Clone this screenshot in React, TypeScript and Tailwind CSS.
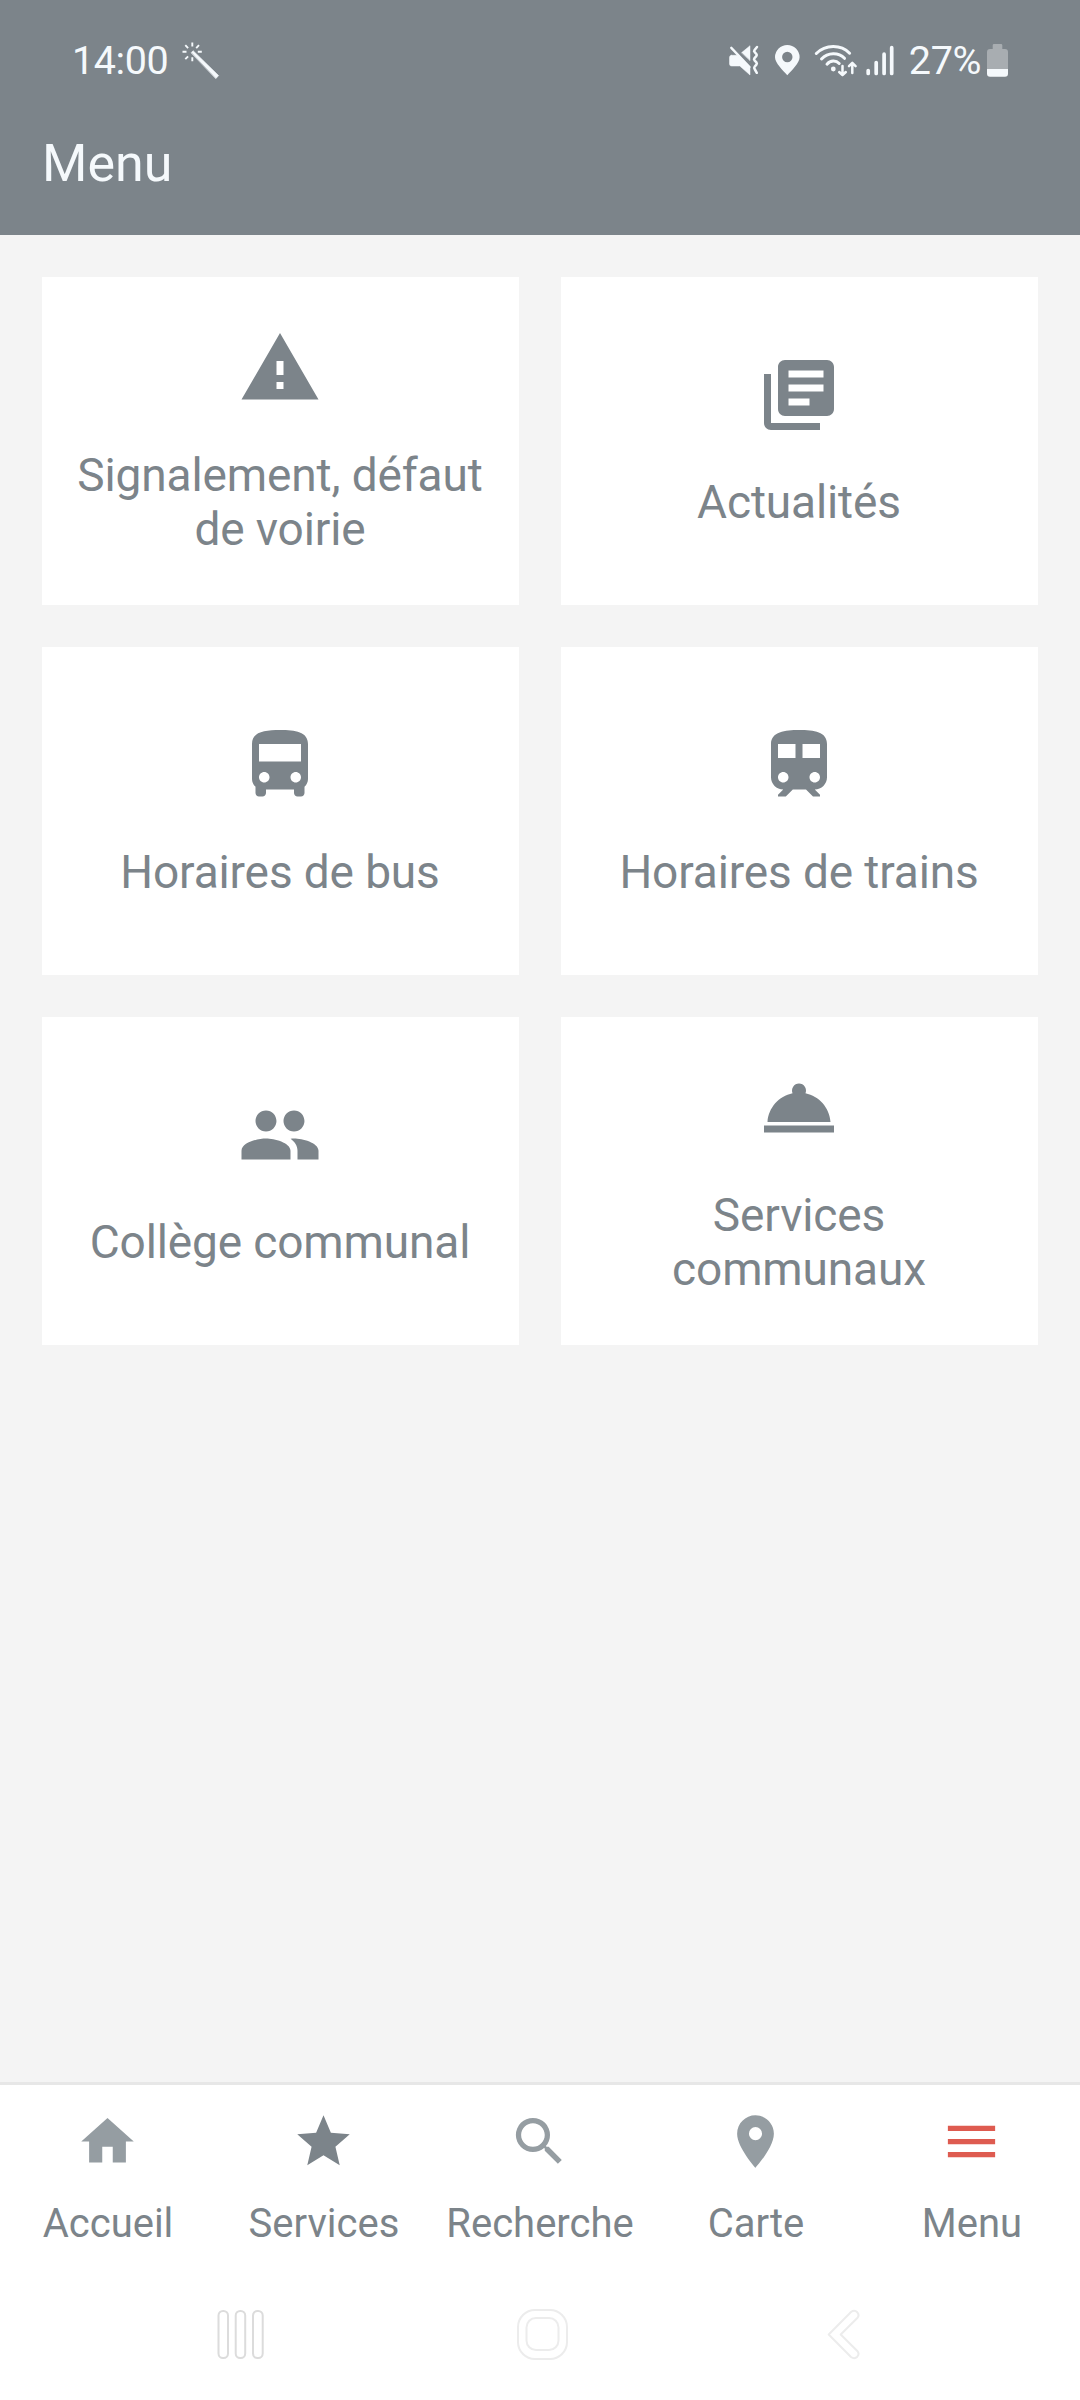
import type { ReactNode } from 'react'
import type { IconType } from 'react-icons'
import {
    MdDirectionsBus,
    MdHome,
    MdLibraryBooks,
    MdLocationOn,
    MdMenu,
    MdPeople,
    MdRoomService,
    MdSearch,
    MdStar,
    MdTrain,
    MdWarning,
} from 'react-icons/md'

interface MenuItem {
    label: string
    icon: IconType
}

interface Tab {
    label: string
    icon: IconType
    color: string
}

const items: MenuItem[] = [
    { label: 'Signalement, défaut de voirie', icon: MdWarning },
    { label: 'Actualités', icon: MdLibraryBooks },
    { label: 'Horaires de bus', icon: MdDirectionsBus },
    { label: 'Horaires de trains', icon: MdTrain },
    { label: 'Collège communal', icon: MdPeople },
    { label: 'Services communaux', icon: MdRoomService },
]

const tabs: Tab[] = [
    { label: 'Accueil', icon: MdHome, color: 'text-[#959da2]' },
    { label: 'Services', icon: MdStar, color: 'text-[#7c848a]' },
    { label: 'Recherche', icon: MdSearch, color: 'text-[#959da2]' },
    { label: 'Carte', icon: MdLocationOn, color: 'text-[#959da2]' },
    { label: 'Menu', icon: MdMenu, color: 'text-[#de5b50]' },
]

interface GlyphProps {
    width: number
    height?: number
    className?: string
    children: ReactNode
}

function Glyph({ width, height = 36, className, children }: GlyphProps) {
    return (
        <svg
            width={width}
            height={height}
            viewBox={`0 0 ${width} ${height}`}
            fill="none"
            strokeLinecap="round"
            strokeLinejoin="round"
            className={className}
        >
            {children}
        </svg>
    )
}

function WandIcon() {
    return (
        <Glyph width={39} height={38} className="ml-[13px]">
            <path
                d="M11.3 1.5v4M11.3 16.2v4M1.5 10.8h4M16.8 10.8h4M4.3 4.2l2.8 2.9M18 4.2l-2.8 2.9M4.3 18.2l2.8-2.9"
                stroke="currentColor"
                strokeWidth="1.9"
                strokeLinecap="butt"
            />
            <path
                d="M10.3 11.6l1.8-1.9L37.6 34.6 35 37.4z"
                fill="currentColor"
                stroke="currentColor"
                strokeWidth="0.6"
            />
        </Glyph>
    )
}

function MuteIcon() {
    return (
        <Glyph width={32}>
            <path
                d="M3.5 13.3H10L22 25.5V33L11.8 24H3.5a2 2 0 0 1-2-2v-6.7a2 2 0 0 1 2-2zM13.7 10.6L22 3.7V18.3z"
                fill="currentColor"
                stroke="currentColor"
                strokeWidth="0.5"
            />
            <path
                d="M3.3 5.8L21.5 25"
                stroke="currentColor"
                strokeWidth="2.4"
            />
            <path
                d="M29 5l-2.6 3.2q-.8 1 .3 2l1.6 1.8q1 1 0 2.2l-1.8 2q-1 1.1 0 2.2l1.9 2q.9 1.1 0 2.2l-1.8 2.2q-.9 1.1 0 2.2l2.2 3.8"
                stroke="currentColor"
                strokeWidth="2.5"
            />
        </Glyph>
    )
}

function LocationIcon() {
    return (
        <Glyph width={27} className="ml-[14px]">
            <path
                d="M13.3 33.3C9 28.5 1 21 1 15.3a12.3 12.3 0 0 1 24.6 0c0 5.7-8 13.2-12.3 18zM13.3 9.8a5.2 5.2 0 1 0 0 10.4 5.2 5.2 0 0 0 0-10.4z"
                fill="currentColor"
                fillRule="evenodd"
            />
        </Glyph>
    )
}

function WifiIcon() {
    return (
        <Glyph width={44} className="ml-[13px]">
            <path
                d="M2.3 11.5C11.5 2.2 27 2.2 35.6 11.2M7.5 17C14 10 24.5 10 30.5 16.3M13 22.2c3.5-4 9-4 12.2-.7"
                stroke="currentColor"
                strokeWidth="3"
            />
            <circle cx="19.3" cy="27" r="2.4" fill="currentColor" />
            <path
                d="M28.5 24v9M25.2 30l3.3 3.2 3.3-3.2M38.3 31V21M35 24.2l3.3-3.3 3.3 3.3"
                stroke="currentColor"
                strokeWidth="2.5"
            />
        </Glyph>
    )
}

function SignalIcon() {
    return (
        <Glyph width={29} className="ml-[7px]">
            <path
                d="M3.2 28.5V31.5M11.2 20.5V31.5M19.1 12.2V31.5M26.7 5.7V31.5"
                stroke="currentColor"
                strokeWidth="3.7"
            />
        </Glyph>
    )
}

function BatteryIcon() {
    return (
        <Glyph width={21} className="ml-1.5">
            <path
                d="M7 2h7q1.3 0 1.3 1.3V7H18q3 0 3 3v17H0V10q0-3 3-3h2.7V3.3Q5.7 2 7 2z"
                fill="#a8adb1"
            />
            <path d="M0 27h21v4.7q0 3-3 3H3q-3 0-3-3z" fill="currentColor" />
        </Glyph>
    )
}

function StatusBar() {
    return (
        <div className="flex h-12 items-center justify-between px-[72px] text-[39.5px] leading-[46px] tracking-[-0.4px]">
            <div className="flex items-center">
                <span className="pt-px">14:00</span>
                <WandIcon />
            </div>
            <div className="flex items-center">
                <MuteIcon />
                <LocationIcon />
                <WifiIcon />
                <SignalIcon />
                <span className="ml-[15px] pt-px">27%</span>
                <BatteryIcon />
            </div>
        </div>
    )
}

function MenuCard({ label, icon: Icon }: MenuItem) {
    return (
        <div className="flex h-[328px] flex-col items-center justify-center gap-[38px] bg-white px-8">
            <Icon size={84} className="mr-px" />
            <span className="pr-px text-center text-[46px] leading-[54px] tracking-[-0.13px]">
                {label}
            </span>
        </div>
    )
}

function TabBar() {
    return (
        <nav className="grid grid-cols-5 border-t-[3px] border-[#e7e7e7] bg-white pt-[25px]">
            {tabs.map(({ label, icon: Icon, color }) => (
                <div
                    key={label}
                    className="flex flex-col items-center gap-[27px]"
                >
                    <div className={color}>
                        <Icon size={63} className="mr-0.5" />
                    </div>
                    <span className="text-[40px] leading-[47px]">{label}</span>
                </div>
            ))}
        </nav>
    )
}

function SystemBar() {
    return (
        <div className="flex h-[153px] bg-white pl-[216px] pt-[61px]">
            <Glyph width={50} height={52}>
                <g stroke="#dcdcdc" strokeWidth="2">
                    <rect x="2.5" y="3" width="9.5" height="47" rx="4.5" />
                    <rect x="19.7" y="3" width="9.5" height="47" rx="4.5" />
                    <rect x="37" y="3" width="9.7" height="47" rx="4.5" />
                </g>
            </Glyph>
            <Glyph width={52} height={52} className="ml-[250px]">
                <g stroke="#ececec" strokeWidth="2">
                    <rect x="2" y="2" width="49" height="49" rx="17" />
                    <rect x="10.5" y="10" width="32" height="32" rx="9.5" />
                </g>
            </Glyph>
            <Glyph width={34} height={52} className="ml-[259px]">
                <path
                    d="M1.7 26.5L24 4q3.5-2.5 6.3.3 2.5 3 0 5.7L13.7 26.5 30.3 43q2.5 2.7 0 5.7-2.8 2.8-6.3.3z"
                    stroke="#ececec"
                    strokeWidth="2"
                />
            </Glyph>
        </div>
    )
}

export default function App() {
    return (
        <div className="flex h-[2400px] w-[1080px] flex-col bg-[#f4f4f4] font-['Roboto',sans-serif] text-[#7c848a]">
            <header className="h-[235px] bg-[#7c848a] pt-9 text-[#f5f9fc]">
                <StatusBar />
                <h1 className="mt-[49px] px-[42px] text-[52px] leading-[61px]">
                    Menu
                </h1>
            </header>

            <main className="grid flex-1 grid-cols-2 content-start gap-[42px] p-[42px]">
                {items.map((item) => (
                    <MenuCard key={item.label} {...item} />
                ))}
            </main>

            <TabBar />
            <SystemBar />
        </div>
    )
}
